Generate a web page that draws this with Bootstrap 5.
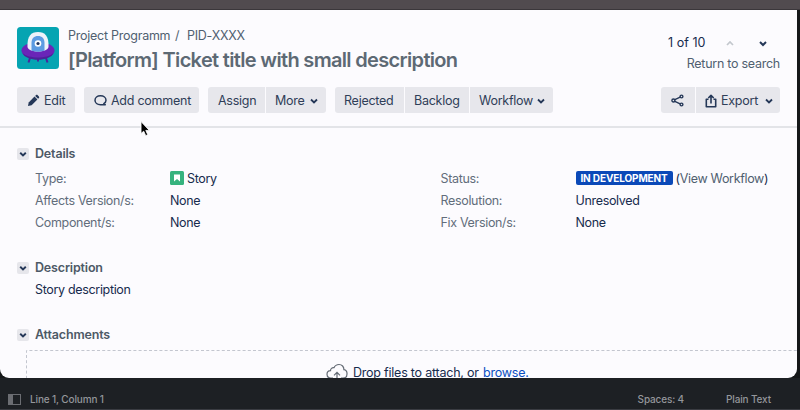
<!DOCTYPE html>
<html lang="en">
<head>
<meta charset="utf-8">
<meta name="viewport" content="width=device-width, initial-scale=1">
<title>PID-XXXX Ticket</title>
<link href="https://cdn.jsdelivr.net/npm/bootstrap@5.3.0/dist/css/bootstrap.min.css" rel="stylesheet">
<style>
body { width: 800px; height: 410px; background: #1d2024; font-family: Inter, "Liberation Sans", sans-serif; font-size: 12.5px; letter-spacing: -.33px; line-height: 20px; color: #172b4d; }
svg { display: block; flex: none; }
.titlebar { height: 10px; background: #514b4f; border-bottom: 1px solid #3b373b; }
.desktop { background: #151719; height: 368px; }
.ticket { width: 797px; height: 368px; background: #fcfbfe; border-radius: 0 0 9px 9px; }
.ticket-head { height: 118px; padding: 17px 17px 0; border-bottom: 2px solid #e3e4e8; }
.head-top { height: 60px; }
.head-text { margin-left: 9px; }
.crumbs { color: #505f70; line-height: 18px; letter-spacing: -.25px; white-space: nowrap; }
.crumbs .project { width: 102px; }
.crumbs .sep { width: 17px; padding-left: 5px; }
.ticket-title { font-size: 20px; font-weight: 600; line-height: 30px; color: #5d6974; letter-spacing: -.67px; white-space: nowrap; }
.pager { padding-top: 5px; line-height: 21px; }
.pager .count { width: 38px; margin-right: 18px; letter-spacing: .05px; white-space: nowrap; }
.pager .up { margin-right: 21px; }
.pager .steps { padding-right: 11px; }
.back-link { letter-spacing: -.26px; }
.btn-jira { --bs-btn-padding-x: 10px; --bs-btn-padding-y: 0; --bs-btn-font-size: 12.5px; --bs-btn-color: #2f3e58; --bs-btn-bg: #e7e7ec; --bs-btn-border-width: 0; --bs-btn-border-radius: 3px; --bs-btn-hover-bg: #dcdce3; --bs-btn-hover-color: #2f3e58; height: 26px; line-height: 26px; display: flex; align-items: center; white-space: nowrap; letter-spacing: -.25px; }
.btn-jira.btn { padding-top: 1px; }
.tools { gap: 9px; }
.tools .btn-group { gap: 2px; }
.tools .btn-group > .btn { flex: none; margin: 0; }
.w-edit { width: 58px; } .w-comment { width: 115px; } .w-assign { width: 57px; } .w-more { width: 60px; padding: 0 7px 0 9px; }
.w-rejected { width: 69px; padding: 0 9px; } .w-backlog { width: 64px; padding: 0 9px; } .w-flow { width: 83px; padding: 0 7px 0 9px; } .w-share { width: 34px; } .w-export { width: 84px; padding-right: 6px; padding-left: 9px; }
.section-title { font-size: 12.5px; font-weight: 600; line-height: 20px; color: #4d5966; gap: 6px; margin: 0; letter-spacing: -.17px; }
.toggle { width: 12px; height: 12px; background: #e6e6eb; border-radius: 2px; }
.details { padding: 4px 0 0 18px; line-height: 22px; }
.details .term { width: 135px; color: #626d7b; font-weight: 400; }
.details .col-left { width: 405.5px; }
.details dd, .details dt, .details dl { margin: 0; }
.type-icon { margin: 0 3px 2px 0; }
.ticket-body { padding: 16px 0 0 17px; }
.status-pill { height: 14px; width: 97px; background: #0b49b8; color: #fff; font-size: 10px; letter-spacing: -.12px; font-weight: 700; line-height: 14px; border-radius: 2px; margin: 0 3px 2px 0; }
.muted-link { color: #505f70; }
.description { margin-top: 24px; }
.story { padding: 2px 0 0 18px; }
.attachments { margin-top: 25px; }
.dropzone { display: grid; margin-left: 9px; margin-top: 5px; height: 60px; }
.dash, .drop-label { grid-area: 1 / 1; }
.drop-label { align-self: start; padding: 13px 0 0 300px; letter-spacing: -.22px; }
.cloud { margin-right: 5px; }
.browse-link { color: #0b4fc1; margin-left: 1px; }
.editor-bar { height: 32px; font-size: 10px; font-weight: 500; letter-spacing: -.14px; line-height: 20px; color: #94969b; padding: 11px 29px 0 8px; border-bottom: 1px solid #3a3c42; }
.panel-icon { margin: 5px 9px 0 0; }
.plain { margin-left: 42px; }
.pointer { position: absolute; left: 139px; top: 120px; }
</style>
</head>
<body class="m-0 overflow-hidden position-relative">
<div class="titlebar"></div>
<div class="desktop">
<main class="ticket overflow-hidden">
  <header class="ticket-head">
    <div class="head-top d-flex">
      <svg width="42" height="42" viewBox="0 0 42 42"><rect width="42" height="42" rx="3.5" fill="#06a4b2"/><path d="M13 31l-1.500 4.500M29 31l1.500 4.500M21 32v2.500" stroke="#4b23a0" stroke-width="2"/><ellipse cx="21" cy="23.500" rx="16.500" ry="8.500" fill="#6a25b8"/><path d="M5.500 26c6 6 25 6 31 0-3 9-28 9-31 0z" fill="#4b2299"/><path d="M10.500 20C10 9 14 5 21 5s11 4 10.500 15c-1 6-20 6-21 0z" fill="#edf2fa"/><path d="M14.500 23.500V16c0-4.500 2.500-7 6.500-7s6.500 2.500 6.500 7v7.500c-3 1.500-10 1.500-13 0z" fill="#5c9be2"/><circle cx="21" cy="16.500" r="3.300" fill="#fff"/><circle cx="21" cy="16.500" r="1.600" fill="#1f3460"/></svg>
      <div class="head-text">
        <nav class="crumbs d-flex"><span class="project">Project Programm</span><span class="sep">/</span><span>PID-XXXX</span></nav>
        <h1 class="ticket-title m-0">[Platform] Ticket title with small description</h1>
      </div>
      <div class="pager ms-auto d-flex flex-column align-items-end">
        <div class="steps d-flex align-items-center"><span class="count">1 of 10</span>
          <svg class="up" width="12" height="12" viewBox="0 0 12 12" fill="none" stroke="#c3c7cd" stroke-width="1.700"><path d="M3 8l3-3 3 3"/></svg>
          <svg width="12" height="12" viewBox="0 0 12 12" fill="none" stroke="#253858" stroke-width="2"><path d="M3 5l3 3 3-3"/></svg>
        </div>
        <span class="muted-link back-link">Return to search</span>
      </div>
    </div>
    <div class="tools d-flex">
      <button class="btn btn-jira w-edit"><svg class="me-1" width="13" height="13" viewBox="0 0 13 13" fill="#253858"><path d="M1 12l.7-3.600 5.800-5.800 2.900 2.900-5.800 5.800z"/><path d="M8.200 1.900l.8-.8c.5-.5 1-.5 1.500 0l1.400 1.400c.5.500.5 1 0 1.500l-.8.800z"/></svg>Edit</button>
      <button class="btn btn-jira w-comment"><svg class="me-1" width="13" height="13" viewBox="0 0 13 13" fill="none" stroke="#253858" stroke-width="1.500"><path d="M9.800 9.700C11.300 8.800 12 7.700 12 6.200 12 3.600 9.700 1.700 6.500 1.700S1 3.600 1 6.200s2.300 4.500 5.500 4.500h4.800c-.8-.1-1.200-.4-1.500-1z" stroke-linejoin="round"/></svg>Add comment</button>
      <div class="btn-group">
        <button class="btn btn-jira w-assign">Assign</button>
        <button class="btn btn-jira w-more">More<svg class="ms-auto" width="10" height="10" viewBox="0 0 10 10" fill="none" stroke="#253858" stroke-width="1.800"><path d="M2 3.500l3 3 3-3"/></svg></button>
      </div>
      <div class="btn-group">
        <button class="btn btn-jira w-rejected">Rejected</button>
        <button class="btn btn-jira w-backlog">Backlog</button>
        <button class="btn btn-jira w-flow">Workflow<svg class="ms-auto" width="10" height="10" viewBox="0 0 10 10" fill="none" stroke="#253858" stroke-width="1.800"><path d="M2 3.500l3 3 3-3"/></svg></button>
      </div>
      <div class="btn-group ms-auto">
        <button class="btn btn-jira w-share" aria-label="Share"><svg width="13" height="13" viewBox="0 0 13 13" fill="none" stroke="#253858" stroke-width="1.400"><path d="M3.800 5.700l5.400-2.600M3.800 7.300l5.400 2.600"/><circle cx="2.400" cy="6.500" r="1.500"/><circle cx="10.500" cy="2.500" r="1.400"/><circle cx="10.500" cy="10.500" r="1.400"/></svg></button>
        <button class="btn btn-jira w-export"><svg class="me-1" width="12" height="14" viewBox="0 0 12 14" fill="none" stroke="#253858" stroke-width="1.600"><path d="M3.500 5.300H1.300v7.500h9.400V5.300H8.500M6 9.500V1.800M3.300 4L6 1.400 8.700 4" stroke-linejoin="round"/></svg>Export<svg class="ms-auto" width="10" height="10" viewBox="0 0 10 10" fill="none" stroke="#253858" stroke-width="1.800"><path d="M2 3.500l3 3 3-3"/></svg></button>
      </div>
    </div>
  </header>
  <div class="ticket-body">
    <section>
      <h2 class="section-title d-flex align-items-center"><span class="toggle"><svg width="12" height="12" viewBox="0 0 12 12" fill="none" stroke="#253858" stroke-width="1.900"><path d="M3.200 4.700L6 7.400l2.800-2.700"/></svg></span>Details</h2>
      <div class="details d-flex">
        <dl class="col-left">
          <div class="d-flex"><dt class="term">Type:</dt><dd class="d-flex align-items-center"><svg class="type-icon" width="14" height="14" viewBox="0 0 14 14"><rect width="14" height="14" rx="1.500" fill="#36b37e"/><path d="M4 3.500h6v7L7 7.900l-3 2.600z" fill="#fff"/></svg>Story</dd></div>
          <div class="d-flex"><dt class="term">Affects Version/s:</dt><dd>None</dd></div>
          <div class="d-flex"><dt class="term">Component/s:</dt><dd>None</dd></div>
        </dl>
        <dl>
          <div class="d-flex"><dt class="term">Status:</dt><dd class="d-flex align-items-center"><span class="status-pill text-center">IN DEVELOPMENT</span><span>(<span class="muted-link">View Workflow</span>)</span></dd></div>
          <div class="d-flex"><dt class="term">Resolution:</dt><dd>Unresolved</dd></div>
          <div class="d-flex"><dt class="term">Fix Version/s:</dt><dd>None</dd></div>
        </dl>
      </div>
    </section>
    <section class="description">
      <h2 class="section-title d-flex align-items-center"><span class="toggle"><svg width="12" height="12" viewBox="0 0 12 12" fill="none" stroke="#253858" stroke-width="1.900"><path d="M3.200 4.700L6 7.400l2.800-2.700"/></svg></span>Description</h2>
      <p class="story m-0">Story description</p>
    </section>
    <section class="attachments">
      <h2 class="section-title d-flex align-items-center"><span class="toggle"><svg width="12" height="12" viewBox="0 0 12 12" fill="none" stroke="#253858" stroke-width="1.900"><path d="M3.200 4.700L6 7.400l2.800-2.700"/></svg></span>Attachments</h2>
      <div class="dropzone">
        <svg class="dash" width="775" height="60" fill="none" stroke="#c3c6cf" stroke-dasharray="3 2.200"><path d="M.5 60V.5H775"/></svg>
        <div class="drop-label d-flex align-items-center"><svg class="cloud" width="22" height="20" viewBox="0 0 22 20" fill="none" stroke="#636a74" stroke-width="1.200"><path d="M7 15H5C2.500 15 1 13.500 1 11.300 1 9.200 2.500 7.800 4.500 7.700c0-2 1.500-3.300 3.500-3C9 2.500 10.700 1.500 13 1.500c3 0 5 2.300 4.900 5.200 2 .3 3.200 2 3.100 4.200 0 2.500-1.500 4.100-4 4.100h-2M11 18V9.500M8 12.300l3-3 3 3"/></svg><span>Drop files to attach, or <a class="browse-link text-decoration-none" href="#">browse.</a></span></div>
      </div>
    </section>
  </div>
</main>
</div>
<footer class="editor-bar d-flex">
  <svg class="panel-icon" width="13" height="11" viewBox="0 0 13 11"><rect x=".5" y=".5" width="12" height="10" fill="none" stroke="#6b6d72"/><path d="M1 1h4v9H1z" fill="#6b6d72"/></svg>
  <span>Line 1, Column 1</span><span class="ms-auto">Spaces: 4</span><span class="plain">Plain Text</span>
</footer>
<svg class="pointer" width="13" height="18" viewBox="0 0 13 18"><path d="M2 1.500v12l2.700-2.300 2 4.500 2.100-1-2-4.300h3.600z" fill="#000" stroke="#fff" stroke-width=".9"/></svg>
<script src="https://cdn.jsdelivr.net/npm/bootstrap@5.3.0/dist/js/bootstrap.bundle.min.js"></script>
</body>
</html>
